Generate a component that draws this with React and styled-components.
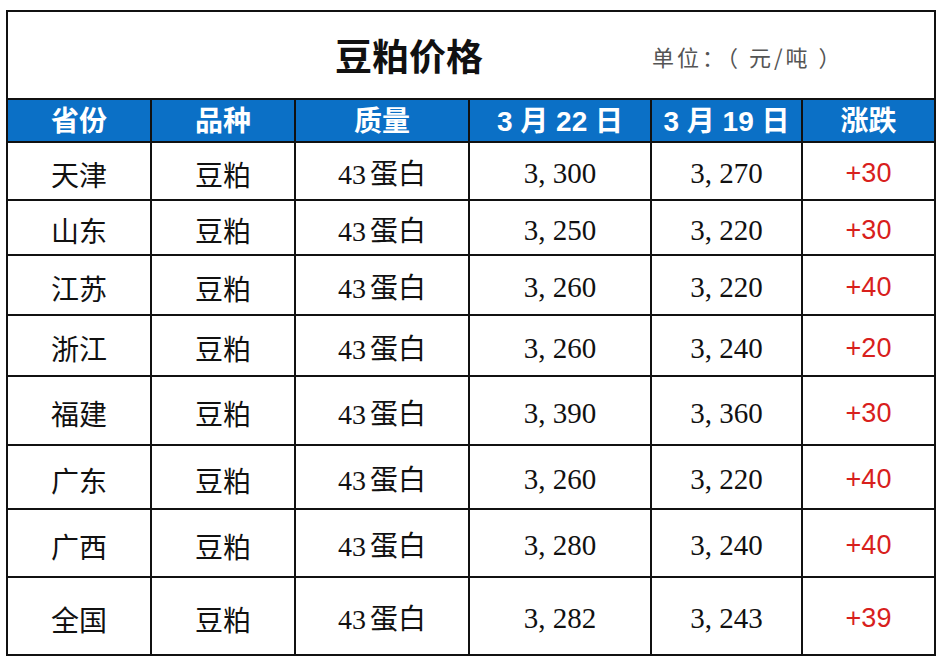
import React from 'react'
import styled, { createGlobalStyle } from 'styled-components'

const GlobalStyle = createGlobalStyle`
  body {
    margin: 0;
    background: #fff;
    font-family: "Noto Sans CJK SC", "Noto Sans", sans-serif;
  }
`

const columns = [
  { title: '省份', width: 144 },
  { title: '品种', width: 144 },
  { title: '质量', width: 174 },
  { title: '3 月 22 日', width: 182 },
  { title: '3 月 19 日', width: 151 },
  { title: '涨跌', width: 133 },
]

const rows = [
  { prov: '天津', p1: '3, 300', p2: '3, 270', diff: '+30', h: 58 },
  { prov: '山东', p1: '3, 250', p2: '3, 220', diff: '+30', h: 55 },
  { prov: '江苏', p1: '3, 260', p2: '3, 220', diff: '+40', h: 60 },
  { prov: '浙江', p1: '3, 260', p2: '3, 240', diff: '+20', h: 61 },
  { prov: '福建', p1: '3, 390', p2: '3, 360', diff: '+30', h: 69 },
  { prov: '广东', p1: '3, 260', p2: '3, 220', diff: '+40', h: 64 },
  { prov: '广西', p1: '3, 280', p2: '3, 240', diff: '+40', h: 68 },
  { prov: '全国', p1: '3, 282', p2: '3, 243', diff: '+39', h: 78 },
]

const Page = styled.div`
  padding: 10px 0 0 6px;
`

const Table = styled.table`
  border-collapse: collapse;
  table-layout: fixed;
  width: 930px;
  border: 2px solid #111;
  td,
  th {
    border: 2px solid #111;
    padding: 0;
    text-align: center;
  }
`

const TitleCell = styled.td`
  height: 86px;
`

const TitleRow = styled.div`
  display: flex;
  align-items: center;
  padding-left: 327px;
`

const Title = styled.span`
  font-size: 37px;
  font-weight: 700;
  color: #111;
  width: 150px;
  text-align: left;
`

const Unit = styled.span`
  margin-left: 167px;
  margin-top: 2px;
  font-size: 22px;
  color: #555;
  letter-spacing: 3px;
  white-space: nowrap;
`

const HeadCell = styled.th`
  background: #0b70c6;
  color: #fff;
  height: 39px;
  font-size: 28px;
  font-weight: 700;
  line-height: 1;
  padding-top: 2px !important;
  font-family: "Liberation Sans", "Noto Sans CJK SC", sans-serif;
`

const Cell = styled.td`
  font-size: 28px;
  color: #111;
  line-height: 1;
  padding-top: 5px !important;
`

const Num = styled(Cell)`
  font-family: "Liberation Serif", "Noto Sans CJK SC", serif;
  font-size: 29px;
`

const Diff = styled(Cell)`
  font-family: "Liberation Sans", sans-serif;
  color: #d8201c;
  font-size: 27px;
`

const Grade = styled.span`
  font-family: "Liberation Serif", serif;
  margin-right: 4px;
`

export default function App() {
  return (
    <Page>
      <GlobalStyle />
      <Table>
        <colgroup>
          {columns.map((c) => (
            <col key={c.title} style={{ width: c.width }} />
          ))}
        </colgroup>
        <tbody>
          <tr>
            <TitleCell colSpan={6}>
              <TitleRow>
                <Title>豆粕价格</Title>
                <Unit>单位：（ 元/吨 ）</Unit>
              </TitleRow>
            </TitleCell>
          </tr>
          <tr>
            {columns.map((c) => (
              <HeadCell key={c.title}>{c.title}</HeadCell>
            ))}
          </tr>
          {rows.map((r) => (
            <tr key={r.prov} style={{ height: r.h }}>
              <Cell>{r.prov}</Cell>
              <Cell>豆粕</Cell>
              <Cell>
                <Grade>43</Grade>蛋白
              </Cell>
              <Num>{r.p1}</Num>
              <Num>{r.p2}</Num>
              <Diff>{r.diff}</Diff>
            </tr>
          ))}
        </tbody>
      </Table>
    </Page>
  )
}
